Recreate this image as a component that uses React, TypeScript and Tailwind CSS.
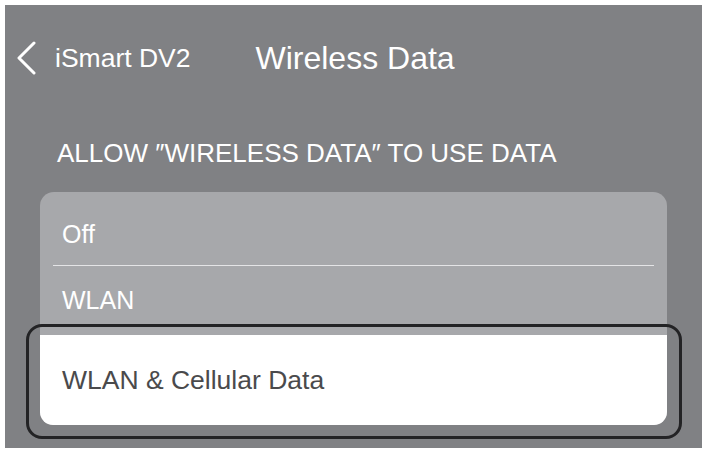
export default function App() {
  return (
    <div className="h-[454px] w-[709px] bg-white pt-[5px] pl-[5px] pr-[7px] pb-[6px] font-['Liberation_Sans',Arial,sans-serif]">
      <div className="flex h-full flex-col bg-[#808184]">
        {/* Header */}
        <header className="flex h-[104px] items-center pl-[11px] pt-[2px]">
          <svg width="22" height="34" viewBox="0 0 22 34" className="shrink-0">
            <path d="M18 2 L3 17 L18 32" fill="none" stroke="white" strokeWidth="3" strokeLinecap="round" strokeLinejoin="round" />
          </svg>
          <span className="ml-[17px] text-[26.5px] leading-none text-white">iSmart DV2</span>
          <span className="ml-[65px] text-[32px] leading-none text-white">Wireless Data</span>
        </header>

        {/* Section title */}
        <p className="ml-[52px] mt-[31px] text-[26px] leading-none text-white">ALLOW ″WIRELESS DATA″ TO USE DATA</p>

        {/* Options card */}
        <div className="mx-[35px] mt-[26px] rounded-[14px] bg-[#a7a8ab]">
          <div className="flex h-[73px] items-center px-[22px] pt-[12px] text-[25px] leading-none text-white">Off</div>
          <div className="mx-[13px] h-px bg-[#e4e4e6]" />
          <div className="flex h-[69px] items-center px-[22px] text-[25px] leading-none text-white">WLAN</div>
          <div className="relative flex h-[90px] items-center rounded-b-[13px] bg-white px-[22px] text-[26.5px] leading-none text-[#4a4a4c]">
            WLAN &amp; Cellular Data
            <div className="pointer-events-none absolute -top-[11px] -bottom-[14px] -left-[14px] -right-[15px] rounded-[16px] border-[3px] border-[#232325]" />
          </div>
        </div>
      </div>
    </div>
  );
}
